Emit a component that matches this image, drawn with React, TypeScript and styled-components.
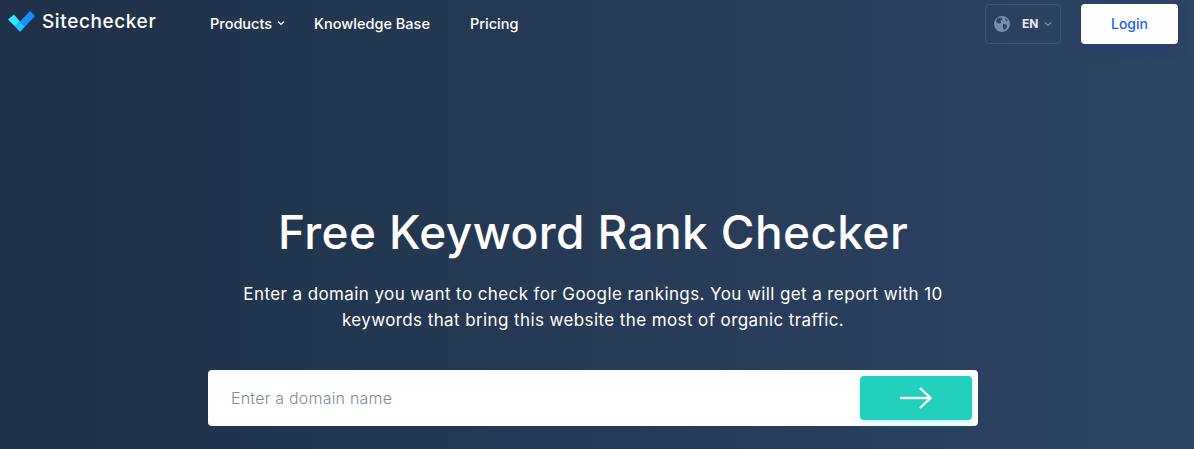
import { createGlobalStyle } from 'styled-components';
import styled from 'styled-components';

const GlobalStyle = createGlobalStyle`
  html, body {
    margin: 0;
    padding: 0;
    overflow: hidden;
  }
  body {
    font-family: Inter, "Liberation Sans", sans-serif;
    color: #fff;
  }
`;

const Page = styled.div`
  width: 1194px;
  height: 449px;
  overflow: hidden;
  background: linear-gradient(90deg, #1f3148 0%, #2e4464 100%);
`;

const Header = styled.header`
  display: flex;
  align-items: center;
  height: 48px;
  padding: 0 16px 0 8px;
`;

const Brand = styled.a`
  display: flex;
  align-items: center;
  gap: 7px;
  width: 202px;
  font-size: 19px;
  font-weight: 500;
  letter-spacing: 0.6px;
  margin-top: -5px;
`;

const Nav = styled.nav`
  display: flex;
  align-items: center;
  gap: 40px;
  padding-bottom: 2px;
`;

const NavItem = styled.a`
  display: flex;
  align-items: center;
  gap: 5px;
  font-size: 14.5px;
  font-weight: 500;
`;

const RightSide = styled.div`
  display: flex;
  align-items: center;
  gap: 20px;
  margin-left: auto;
`;

const LangPicker = styled.div`
  display: flex;
  align-items: center;
  width: 76px;
  height: 40px;
  box-sizing: border-box;
  padding-left: 8px;
  border: 1px solid #3f5472;
  border-radius: 4px;
`;

const LangLabel = styled.span`
  margin: 0 6px 0 12px;
  padding-bottom: 1px;
  font-size: 12px;
  font-weight: 700;
  color: #e6ebf2;
`;

const LoginButton = styled.button`
  width: 97px;
  height: 40px;
  padding: 0 0 2px;
  border: 0;
  border-radius: 4px;
  background: #fff;
  color: #1a63f4;
  font-family: inherit;
  font-size: 14px;
  font-weight: 500;
  box-shadow: 0 4px 12px rgba(26, 60, 140, 0.3);
`;

const Hero = styled.section`
  display: flex;
  flex-direction: column;
  align-items: center;
  padding: 154px 8px 0 0;
`;

const Title = styled.h1`
  margin: 0;
  font-size: 46px;
  line-height: 60px;
  font-weight: 500;
  letter-spacing: 0.4px;
`;

const Subtitle = styled.p`
  width: 720px;
  margin: 19px 0 0;
  font-size: 17px;
  line-height: 26px;
  letter-spacing: 0.4px;
  text-align: center;
`;

const SearchBox = styled.form`
  display: flex;
  align-items: center;
  justify-content: space-between;
  width: 770px;
  height: 56px;
  box-sizing: border-box;
  margin-top: 37px;
  padding: 0 6px 0 21px;
  background: #fff;
  border-radius: 4px;
`;

const DomainInput = styled.input`
  flex: 1;
  border: 0;
  outline: 0;
  font-family: inherit;
  font-size: 16px;
  font-weight: 300;
  letter-spacing: 0.2px;
  &::placeholder {
    color: #7f8a99;
    opacity: 1;
  }
`;

const SubmitButton = styled.button`
  display: flex;
  align-items: center;
  justify-content: center;
  width: 112px;
  height: 44px;
  border: 0;
  border-radius: 4px;
  background: #22d0bc;
  box-shadow: 0 4px 10px rgba(34, 208, 188, 0.2);
`;

const ChevronIcon = styled.svg<{ $muted?: boolean; $tucked?: boolean }>`
  color: ${(p) => (p.$muted ? '#8093ad' : '#fff')};
  margin-right: ${(p) => (p.$tucked ? '-11px' : '0')};
`;

const Chevron = ({ muted, tucked }: { muted?: boolean; tucked?: boolean }) => (
  <ChevronIcon
    $muted={muted}
    $tucked={tucked}
    width="8"
    height="6"
    viewBox="0 0 8 6"
    fill="none"
    stroke="currentColor"
    strokeWidth="1.1"
  >
    <path d="M1 1.5 L4 4.5 L7 1.5" />
  </ChevronIcon>
);

const Logo = () => (
  <svg width="27" height="21" viewBox="0 0 27 21">
    <path d="M12 10.5 L22 0 L27 5 L17 15.5 Z" fill="#1a8fff" />
    <path d="M0 8.5 L6 3.5 L12 10.5 L7 15.5 Z" fill="#34e3ff" />
    <path d="M7 15.5 L12 10.5 L17 15.5 L12 21 Z" fill="#1cc4ff" />
  </svg>
);

const Globe = () => (
  <svg width="16" height="16" viewBox="0 0 16 16">
    <circle cx="8" cy="8" r="8" fill="#7a8ca8" />
    <path
      d="M3 2.5 L7 1.5 L8.5 3.5 L6.5 5 L7 7 L4.5 7.5 L2 5.5 Z M9 8 L12.5 8.5 L13 11 L10.5 14 L9 12 Z M11 2 L14 4.5 L12 5.5 Z"
      fill="#2e4464"
    />
  </svg>
);

const Arrow = () => (
  <svg width="32" height="22" viewBox="0 0 32 22" fill="none" stroke="#fff" strokeWidth="2.4">
    <path d="M0 11 H30" />
    <path d="M20 1 L30.5 11 L20 21" />
  </svg>
);

export default function App() {
  return (
    <Page>
      <GlobalStyle />
      <Header>
        <Brand>
          <Logo />
          Sitechecker
        </Brand>
        <Nav>
          <NavItem>
            Products <Chevron tucked />
          </NavItem>
          <NavItem>Knowledge Base</NavItem>
          <NavItem>Pricing</NavItem>
        </Nav>
        <RightSide>
          <LangPicker>
            <Globe />
            <LangLabel>EN</LangLabel>
            <Chevron muted />
          </LangPicker>
          <LoginButton>Login</LoginButton>
        </RightSide>
      </Header>
      <Hero>
        <Title>Free Keyword Rank Checker</Title>
        <Subtitle>
          Enter a domain you want to check for Google rankings. You will get a report with 10 keywords that bring this
          website the most of organic traffic.
        </Subtitle>
        <SearchBox onSubmit={(e) => e.preventDefault()}>
          <DomainInput placeholder="Enter a domain name" />
          <SubmitButton>
            <Arrow />
          </SubmitButton>
        </SearchBox>
      </Hero>
    </Page>
  );
}
